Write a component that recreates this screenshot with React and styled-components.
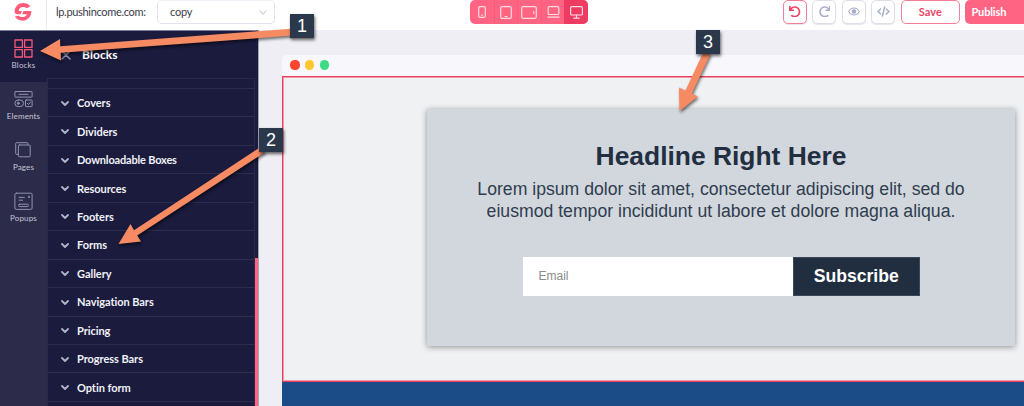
import React from "react";
import styled, { createGlobalStyle } from "styled-components";
import { FaUndo, FaRedo } from "react-icons/fa";

const GlobalStyle = createGlobalStyle`
  * { box-sizing: border-box; }
  body { margin: 0; overflow: hidden; font-family: Lato, "Open Sans", sans-serif; }
  button, input { font: inherit; margin: 0; }
`;

const Screen = styled.div`
  position: relative;
  display: flex;
  flex-direction: column;
  width: 1024px;
  height: 406px;
  overflow: hidden;
  background: #efeef4;
`;

const Header = styled.header`
  display: flex;
  flex: none;
  align-items: flex-start;
  height: 30px;
  background: #fff;
  > * { flex: none; }
`;

const LogoCell = styled.div`
  width: 47px;
  height: 30px;
  padding: 3px 0 0 14px;
  border-right: 1px solid #e9e9f1;
`;

const Domain = styled.span`
  width: 110px;
  padding-left: 9px;
  font-size: 11px;
  line-height: 23px;
  letter-spacing: -0.32px;
  white-space: nowrap;
  color: #3a3b48;
`;

const Select = styled.div`
  display: flex;
  align-items: center;
  justify-content: space-between;
  width: 118px;
  height: 24px;
  padding: 0 7px 1px 12px;
  border: 1px solid #e3e3ee;
  border-top-color: #f0f0f6;
  border-radius: 5px;
  font-size: 11px;
  letter-spacing: -0.2px;
  color: #3a3b48;
`;

const Devices = styled.div`
  display: flex;
  width: 118px;
  height: 24px;
  margin-left: 195px;
  overflow: hidden;
  border-radius: 5px;
  background: #ff6482;
`;

const Device = styled.button`
  display: flex;
  flex: 1;
  align-items: center;
  justify-content: center;
  padding: 0;
  border: 0;
  border-left: 1px solid ${(p) => (p.$first || p.$active ? "transparent" : "#f85d7e")};
  background: ${(p) => (p.$active ? "#ed3b62" : "transparent")};
  color: #ffdbe3;
`;

const Actions = styled.div`
  display: flex;
  gap: 5.4px;
  margin-left: 195px;
  > * { flex: none; }
`;

const IconButton = styled.button`
  display: flex;
  align-items: center;
  justify-content: center;
  width: 24px;
  height: 24px;
  padding: 0 0 1px;
  border: 1px solid ${(p) => (p.$active ? "#f27e97" : "#dedeea")};
  border-radius: 5px;
  background: #fff;
  color: ${(p) => (p.$active ? "#ea4566" : "#a9adc9")};
  box-shadow: 0 1px 1px rgba(60, 60, 100, 0.12);
`;

const SaveButton = styled.button`
  width: 59.5px;
  height: 24px;
  padding: 0 0 2px;
  border: 1px solid #f27e97;
  border-radius: 5px;
  background: #fff;
  color: #ea4566;
  font-size: 11px;
  font-weight: 700;
`;

const PublishButton = styled.button`
  width: 80px;
  height: 24px;
  padding: 0 0 2px 6px;
  border: 0;
  border-radius: 5px;
  background: #ff6482;
  color: #fff;
  text-align: left;
  font-size: 11px;
  font-weight: 700;
  letter-spacing: -0.15px;
`;

const Body = styled.div`
  display: flex;
  flex: 1;
  min-height: 0;
`;

const Nav = styled.nav`
  display: flex;
  flex: none;
  flex-direction: column;
  width: 47px;
  border-top: 1px solid #7d7e93;
  background: #2c2c4a;
`;

const NavItem = styled.div`
  display: flex;
  flex-direction: column;
  align-items: center;
  height: 51px;
  padding-top: 8px;
  background: ${(p) => (p.$active ? "#1a1b3d" : "transparent")};
  color: ${(p) => (p.$active ? "#f3587a" : "#9092b0")};
  svg { flex: none; }
`;

const NavLabel = styled.span`
  margin-top: 1px;
  font-size: 8px;
  line-height: 12px;
  letter-spacing: 0.15px;
  color: #c4c5d5;
`;

const Panel = styled.aside`
  display: flex;
  flex: none;
  flex-direction: column;
  width: 211.5px;
  border-top: 1px solid #7d7e93;
  border-right: 1px solid #a5a5b8;
  background: #1a1b3d;
`;

const PanelHeader = styled.div`
  display: flex;
  flex: none;
  align-items: center;
  gap: 11.5px;
  height: 47px;
  padding-left: 13.5px;
  font-size: 12px;
  font-weight: 700;
  letter-spacing: 0.1px;
  color: #fff;
`;

const ListArea = styled.div`
  display: flex;
  flex: 1;
  min-height: 0;
  overflow: hidden;
`;

const List = styled.div`
  flex: 1;
  border: 1px solid #28294b;
  border-bottom: 0;
`;

const Spacer = styled.div`
  height: 9px;
`;

const Row = styled.div`
  display: flex;
  align-items: center;
  gap: 8px;
  height: 28.45px;
  padding-left: 13px;
  border-top: 1px solid #2c2d4c;
  font-size: 11px;
  font-weight: 700;
  letter-spacing: ${(p) => (p.$long ? -0.18 : -0.05)}px;
  white-space: nowrap;
  color: #f1f1f7;
`;

const Track = styled.div`
  width: 2.5px;
  padding-top: 180px;
`;

const Thumb = styled.div`
  width: 2.5px;
  height: 160px;
  background: #ff6482;
`;

const Workspace = styled.main`
  flex: 1;
  padding: 25px 0 0 23.5px;
`;

const Browser = styled.div`
  display: flex;
  flex-direction: column;
  width: 880px;
  height: 351px;
`;

const BrowserBar = styled.div`
  display: flex;
  flex: none;
  align-items: center;
  gap: 5.5px;
  height: 21px;
  padding: 0 0 1px 8.4px;
  border-radius: 5px 0 0 0;
  background: #f8f7fc;
`;

const Dot = styled.span`
  width: 9.2px;
  height: 9.2px;
  border-radius: 50%;
  background: ${(p) => p.$color};
`;

const Section = styled.section`
  flex: none;
  height: 306px;
  padding: 32px 0 0 144px;
  border: 1px solid #e8405f;
  box-shadow: inset 0 0 0 1px #ee9aaa;
  background: #f0f1f3;
`;

const BlueBand = styled.div`
  flex: 1;
  background: #1c4c87;
`;

const Card = styled.div`
  display: flex;
  flex-direction: column;
  align-items: center;
  width: 588px;
  height: 237px;
  padding-top: 29px;
  background: #d2d7de;
  box-shadow: 0 1px 6px rgba(0, 0, 0, 0.4);
  font-family: "Liberation Sans", Arial, sans-serif;
  color: #222f40;
`;

const Headline = styled.h1`
  margin: 0;
  font-size: 26.4px;
  line-height: 36px;
  font-weight: 700;
  white-space: nowrap;
`;

const Lead = styled.p`
  margin: 4px 0 0;
  font-size: 17.65px;
  line-height: 22px;
  text-align: center;
  white-space: nowrap;
  color: #303d4e;
`;

const Form = styled.div`
  display: flex;
  width: 397px;
  height: 39px;
  margin-top: 35px;
`;

const EmailInput = styled.input`
  width: 270.5px;
  height: 39px;
  padding: 0 16px 2px;
  border: 0;
  background: #fff;
  font-size: 12px;
  &::placeholder { color: #8b8b8b; opacity: 1; }
`;

const Subscribe = styled.button`
  flex: 1;
  height: 38.5px;
  padding: 0;
  border: 1px solid #3b4859;
  background: #212e3f;
  color: #fff;
  font-size: 17.6px;
  font-weight: 700;
`;

const ArrowLayer = styled.svg`
  position: absolute;
  inset: 0;
  filter: drop-shadow(1px 2px 1.5px rgba(0, 0, 0, 0.55));
`;

const Badge = styled.div`
  position: absolute;
  left: ${(p) => p.$x}px;
  top: ${(p) => p.$y}px;
  width: 24px;
  height: 24px;
  background: #2b384b;
  box-shadow: 1px 2px 3px rgba(0, 0, 0, 0.6);
  font-family: "Liberation Sans", Arial, sans-serif;
  font-size: 18px;
  line-height: 24px;
  text-align: center;
  color: #fff;
`;

const Stroke = ({ w, h, sw = 1, children }) => (
  <svg width={w} height={h} viewBox={`0 0 ${w} ${h}`} fill="none" stroke="currentColor" strokeWidth={sw} strokeLinecap="round" strokeLinejoin="round">
    {children}
  </svg>
);

const Chevron = ({ color = "#b1b2c8", size = 8, sw = 1.8 }) => (
  <svg width={size} height={size} viewBox="0 0 8 8" fill="none" stroke={color} strokeWidth={sw} strokeLinecap="round" strokeLinejoin="round">
    <path d="M1 3 L4 6 L7 3" />
  </svg>
);

const Logo = () => (
  <svg width="18" height="18" viewBox="0 0 18 18" fill="#ff5c7c">
    <path d="M16.4 3.2 C12.8 -.8 5.6 -1 2.4 3.2 C.8 5.4 .2 8 .8 10 C1.6 11 3 11.2 6.6 11.2 L8 8 H4.6 C4.6 4.4 9.4 2.6 12.8 5.2 Z" />
    <path d="M9.4 8 H17.3 C17.6 11.6 15.6 15.4 12 17 C7.6 18.7 3 17.2 .8 13.6 L4.6 12.8 C7.2 15 11.6 14.4 13 11.2 H8.2 Z" />
  </svg>
);

const DEVICES = [
  <Stroke w={8} h={12} sw={1.2}><rect x="0.7" y="0.7" width="6.6" height="10.6" rx="1.2" /><path d="M3.6 9.2h.8" /></Stroke>,
  <Stroke w={12} h={13} sw={1.2}><rect x="0.7" y="0.7" width="10.6" height="11.6" rx="1.3" /><path d="M5 10.5h2" /></Stroke>,
  <Stroke w={16} h={13} sw={1.2}><rect x="0.7" y="0.7" width="14.6" height="11.6" rx="1.5" /><path d="M12.8 5.6v1.8" /></Stroke>,
  <Stroke w={13} h={12} sw={1.2}><rect x="1.2" y="0.7" width="10.6" height="7.8" rx="1" /><path d="M1 11.2h11" /></Stroke>,
  <Stroke w={13} h={13} sw={1.2}><rect x="0.6" y="0.7" width="11.8" height="8.3" rx="1" /><path d="M6.5 9v3M3.8 12.2h5.4" /></Stroke>,
];

const NAV = [
  ["Blocks", <Stroke w={19} h={19} sw={1.3}><rect x="1" y="1" width="7.4" height="7.4" /><rect x="10.6" y="1" width="7.4" height="7.4" /><rect x="1" y="10.6" width="7.4" height="7.4" /><rect x="10.6" y="10.6" width="7.4" height="7.4" /></Stroke>],
  ["Elements", <Stroke w={19} h={19}><rect x="0.9" y="1.5" width="17.2" height="5.6" rx="0.5" /><path d="M5 4.3h9" /><rect x="0.9" y="10" width="8.6" height="6.6" rx="3.3" /><circle cx="4.3" cy="13.3" r="1" fill="currentColor" /><rect x="11.5" y="10" width="6.6" height="6.6" rx="0.6" /><path d="M13.3 13.3l1.2 1.2 2-2.4" /></Stroke>],
  ["Pages", <Stroke w={19} h={19}><path d="M3.6 13.4H2.6a.9.9 0 0 1-.9-.9V2.6a.9.9 0 0 1 .9-.9H13a.9.9 0 0 1 .9.9v.8" /><rect x="4.4" y="4" width="11.8" height="11.8" rx="1" /></Stroke>],
  ["Popups", <Stroke w={19} h={19}><rect x="0.9" y="1.2" width="17.2" height="16.2" rx="1.4" /><path d="M5 5.4h5.4M5 8.2h3.6" /><path d="M15 4.6v.6" strokeWidth="1.7" /><rect x="4.6" y="12.2" width="9.8" height="2.4" rx="1" /></Stroke>],
];

const ROWS = ["Covers", "Dividers", "Downloadable Boxes", "Resources", "Footers", "Forms", "Gallery", "Navigation Bars", "Pricing", "Progress Bars", "Optin form", ""];

export default function App() {
  return (
    <Screen>
      <GlobalStyle />
      <Header>
        <LogoCell><Logo /></LogoCell>
        <Domain>lp.pushincome.com:</Domain>
        <Select>copy<Chevron color="#d3d4e2" sw={1.2} /></Select>
        <Devices>
          {DEVICES.map((icon, i) => (
            <Device key={i} $first={i === 0} $active={i === 4}>{icon}</Device>
          ))}
        </Devices>
        <Actions>
          <IconButton $active><FaUndo size={11.5} /></IconButton>
          <IconButton><FaRedo size={11.5} /></IconButton>
          <IconButton>
            <Stroke w={12} h={9} sw={1.1}><path d="M.7 4.5C3.2-.2 8.8-.2 11.3 4.5 8.8 9.2 3.2 9.2.7 4.5Z" /><circle cx="6" cy="4.5" r="1.8" fill="currentColor" /></Stroke>
          </IconButton>
          <IconButton>
            <Stroke w={13} h={11} sw={1.5}><path d="M3.6 3L1 5.5 3.6 8M9.4 3L12 5.5 9.4 8M7.6 1L5.4 10" /></Stroke>
          </IconButton>
          <SaveButton>Save</SaveButton>
          <PublishButton>Publish</PublishButton>
        </Actions>
      </Header>
      <Body>
        <Nav>
          {NAV.map(([label, icon], i) => (
            <NavItem key={label} $active={i === 0}>{icon}<NavLabel>{label}</NavLabel></NavItem>
          ))}
        </Nav>
        <Panel>
          <PanelHeader>
            <Stroke w={10} h={10}><path d="M1 9L5 5L9 9M1 1L5 5L9 1" stroke="#8d8ea9" strokeWidth="1.6" /></Stroke>
            Blocks
          </PanelHeader>
          <ListArea>
            <List>
              <Spacer />
              {ROWS.map((label) => (
                <Row key={label} $long={label.length > 16}><Chevron />{label}</Row>
              ))}
            </List>
            <Track><Thumb /></Track>
          </ListArea>
        </Panel>
        <Workspace>
          <Browser>
            <BrowserBar>
              <Dot $color="#ff4530" /><Dot $color="#ffc72c" /><Dot $color="#3ddc84" />
            </BrowserBar>
            <Section>
              <Card>
                <Headline>Headline Right Here</Headline>
                <Lead>Lorem ipsum dolor sit amet, consectetur adipiscing elit, sed do<br />eiusmod tempor incididunt ut labore et dolore magna aliqua.</Lead>
                <Form>
                  <EmailInput placeholder="Email" />
                  <Subscribe>Subscribe</Subscribe>
                </Form>
              </Card>
            </Section>
            <BlueBand />
          </Browser>
        </Workspace>
      </Body>
      <ArrowLayer width="1024" height="406" viewBox="0 0 1024 406" fill="#f68a62">
        <path d="M40 51 L60 39 L60.3 46.3 L292 28.7 L292 35.6 L60.7 52.8 L61 60.5 Z" />
        <path d="M118.5 244 L130.5 224 L134 230.2 L259 148 L266 151.5 L137.2 235.5 L141 241.5 Z" />
        <path d="M679.5 111 L679 87.5 L685.5 90.5 L703 53 L711 53 L691.8 93.5 L698 96.5 Z" />
      </ArrowLayer>
      <Badge $x={290} $y={14}>1</Badge>
      <Badge $x={259} $y={128}>2</Badge>
      <Badge $x={696} $y={30}>3</Badge>
    </Screen>
  );
}
